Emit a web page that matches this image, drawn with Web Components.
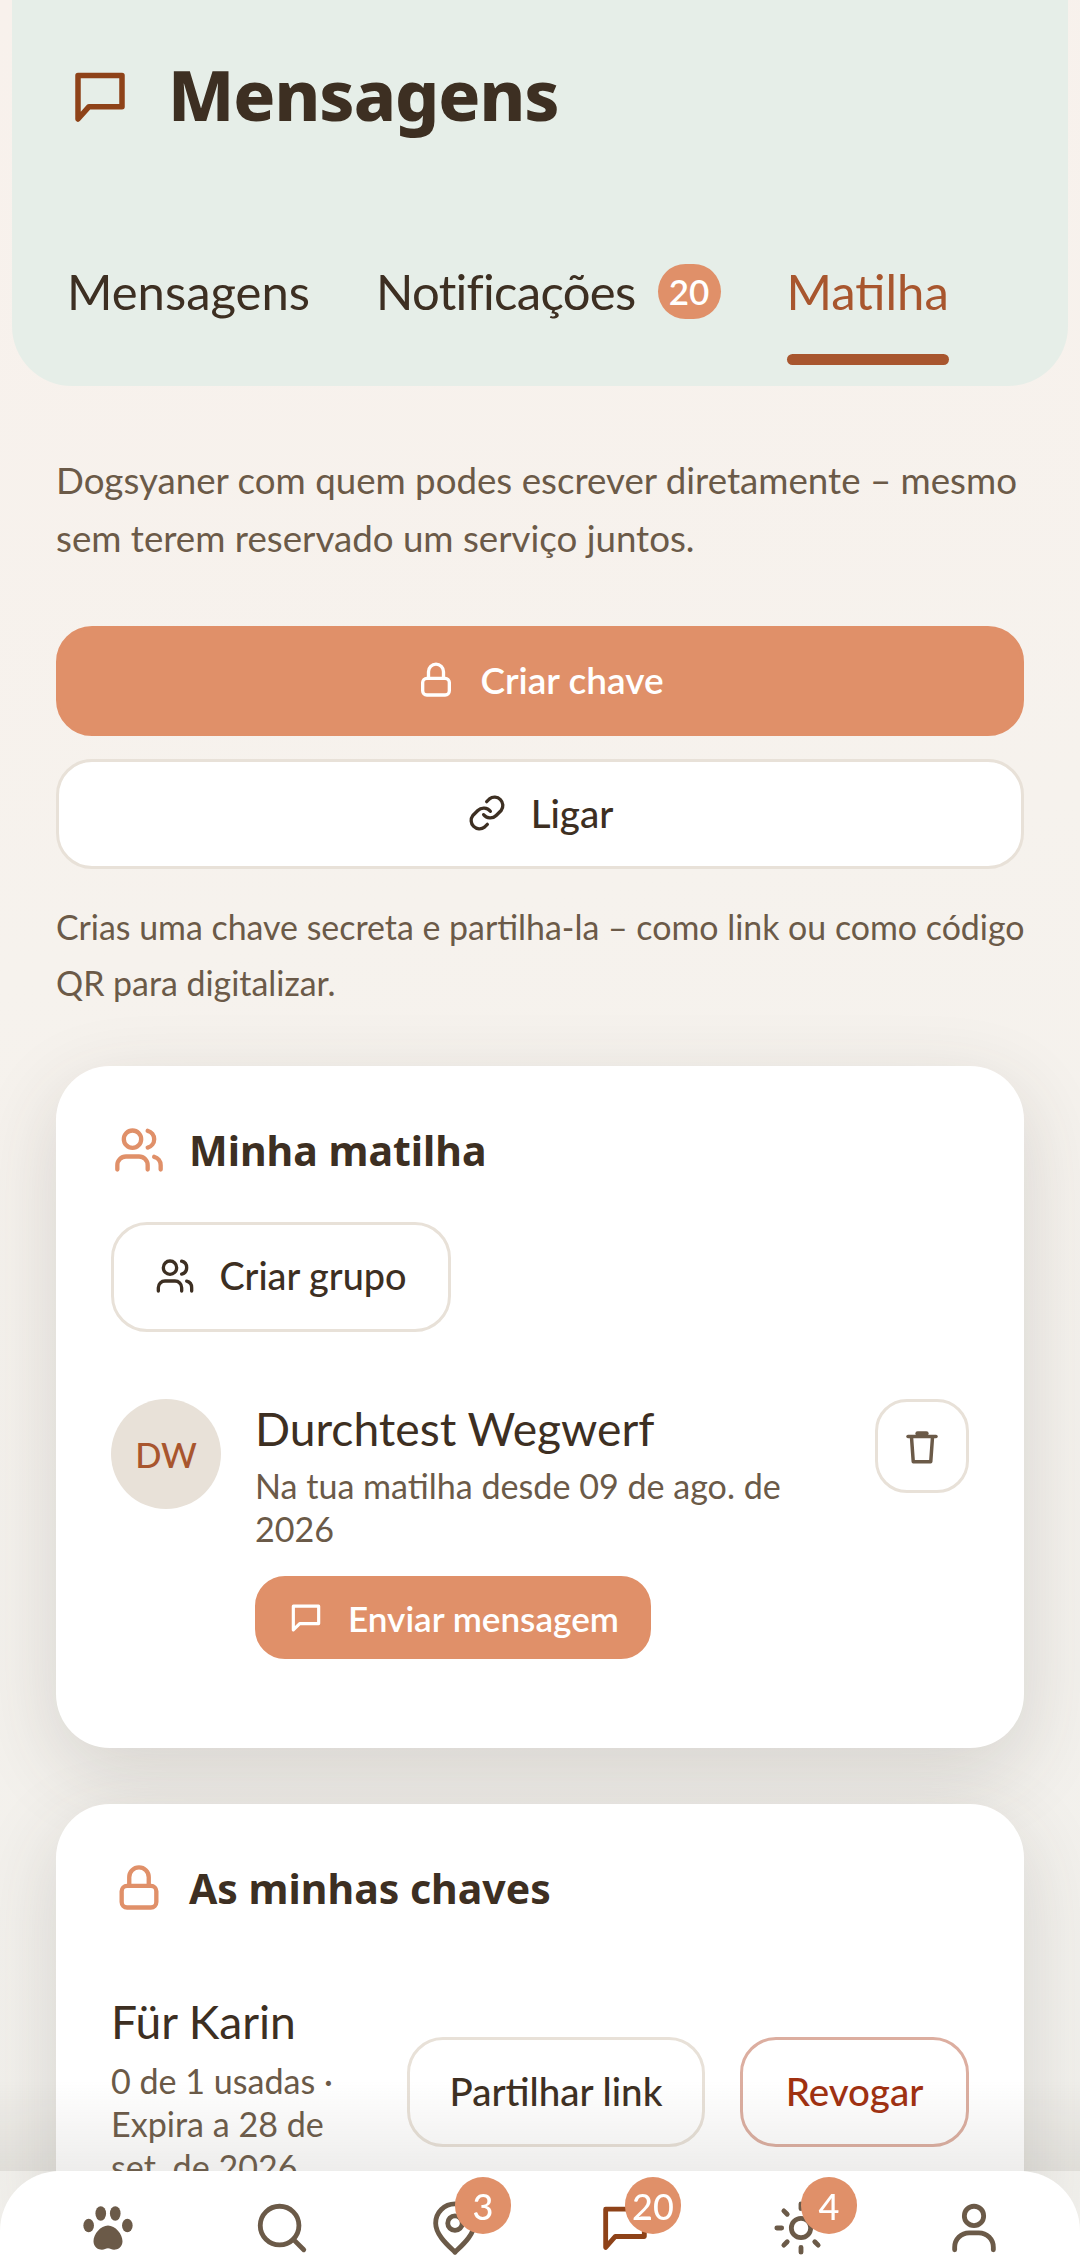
<!DOCTYPE html>
<html lang="pt">
<head>
<meta charset="utf-8">
<title>Mensagens</title>
<style>
  html, body { margin: 0; height: 2268px; overflow: hidden; }
  body {
    background: linear-gradient(170deg, #f8f1ec 0%, #f6f2ed 40%, #f1f0ec 100%);
    font-family: "Lato", "Noto Sans", sans-serif;
    color: #3d2f22;
  }
</style>
</head>
<body>
<msg-header title-text="Mensagens"></msg-header>
<pack-page></pack-page>
<bottom-nav></bottom-nav>

<script>
const ICONS = {
  chat: '<path d="M4 4.200h16v11.300H8L4 20z"/>',
  chatRound: '<path d="M20 15.500H8L4 19.500V4.500h16z"/>',
  lock: '<rect x="4" y="11" width="16" height="10" rx="2.500"/><path d="M7.500 11V7a4.500 4.500 0 0 1 9 0v4"/>',
  link: '<path d="M10 13a5 5 0 0 0 7.500.500l3-3a5 5 0 0 0-7-7l-1.700 1.700"/><path d="M14 11a5 5 0 0 0-7.500-.500l-3 3a5 5 0 0 0 7 7l1.700-1.700"/>',
  users: '<path d="M16 21v-2a4 4 0 0 0-4-4H6a4 4 0 0 0-4 4v2"/><circle cx="9" cy="7" r="4"/><path d="M22 21v-2a4 4 0 0 0-3-3.870"/><path d="M16 3.130a4 4 0 0 1 0 7.750"/>',
  trash: '<path d="M4 6.500h16"/><path d="M9.500 4.800h5" stroke-width="2.600"/><path d="M6 7l1 14h10l1-14"/>',
  search: '<circle cx="11" cy="11" r="8"/><path d="m21 21-4.300-4.300"/>',
  pin: '<path d="M20 10c0 5-5.500 9.500-8 12-2.500-2.500-8-7-8-12a8 8 0 0 1 16 0z"/><circle cx="12" cy="10" r="3"/>',
  sun: '<circle cx="12" cy="12" r="4"/><path d="M12 2v2M12 20v2M4.900 4.900l1.400 1.400M17.700 17.700l1.400 1.400M2 12h2M20 12h2M6.300 17.700l-1.400 1.400M19.100 4.900l-1.400 1.400"/>',
  user: '<path d="M20 21v-1a6 6 0 0 0-6-6h-4a6 6 0 0 0-6 6v1"/><circle cx="12" cy="7" r="4"/>',
  paw: '<g fill="currentColor" stroke="none"><ellipse cx="4" cy="11" rx="2.200" ry="2.800"/><ellipse cx="9" cy="6" rx="2.200" ry="3"/><ellipse cx="15" cy="6" rx="2.200" ry="3"/><ellipse cx="20" cy="11" rx="2.200" ry="2.800"/><path d="M12 11c3 0 6 3.500 6 6.500 0 2.500-2 3.500-3.500 3.500-1 0-1.600-.6-2.500-.6s-1.500.6-2.500.6C8 21 6 20 6 17.500 6 14.500 9 11 12 11z"/></g>'
};

function icon(name, size, stroke) {
  return `<svg width="${size}" height="${size}" viewBox="0 0 24 24" fill="none" stroke="currentColor"
    stroke-width="${stroke || 2}" stroke-linecap="round" stroke-linejoin="round" style="display:block;flex:none">${ICONS[name]}</svg>`;
}

class MsgHeader extends HTMLElement {
  constructor() {
    super();
    this.attachShadow({ mode: "open" });
  }

  connectedCallback() {
    this.shadowRoot.innerHTML = `
      <style>
        :host {
          display: block;
          margin: 0 12px;
          height: 386px;
          box-sizing: border-box;
          padding: 49px 0 0 55px;
          background: #e6eee8;
          border-radius: 0 0 60px 60px;
        }
        .title { display: flex; align-items: center; gap: 35px; color: #8e4218; }
        h1 {
          margin: 0 0 5px;
          font: 800 69.500px/91px "Noto Sans", sans-serif;
          color: #3d2f22;
          letter-spacing: -1px;
        }
        .tabs { display: flex; gap: 66px; margin-top: 91px; }
        .tab {
          display: flex;
          align-items: center;
          gap: 22px;
          height: 129px;
          box-sizing: border-box;
          padding-bottom: 19px;
          font-size: 49px;
          position: relative;
        }
        .tight { letter-spacing: -0.700px; }
        .active { color: #a8562e; }
        .active::after {
          content: "";
          position: absolute;
          left: 0;
          right: 0;
          bottom: 0;
          height: 11px;
          border-radius: 6px;
          background: #a8562e;
        }
        .badge {
          min-width: 63px;
          height: 55px;
          border-radius: 28px;
          background: #e09069;
          color: #fff;
          font-size: 35px;
          font-weight: 600;
          display: flex;
          align-items: center;
          justify-content: center;
        }
      </style>
      <div class="title">${icon("chat", 66)}<h1>${this.getAttribute("title-text")}</h1></div>
      <div class="tabs">
        <div class="tab">Mensagens</div>
        <div class="tab"><span class="tight">Notificações</span><span class="badge">20</span></div>
        <div class="tab active">Matilha</div>
      </div>
    `;
  }
}

class PackButton extends HTMLElement {
  constructor() {
    super();
    this.attachShadow({ mode: "open" });
  }

  connectedCallback() {
    const ic = this.getAttribute("icon");
    this.shadowRoot.innerHTML = `
      <style>
        :host {
          display: inline-flex;
          align-items: center;
          justify-content: center;
          gap: var(--gap, 24px);
          box-sizing: border-box;
          height: 110px;
          padding: 0 40px 3px;
          border-radius: 36px;
          background: #fff;
          border: 3px solid #e8e1d8;
          font-size: 38.500px;
          font-weight: 500;
          color: #3d2f22;
          white-space: nowrap;
        }
        :host([kind="primary"]) {
          background: #e09069;
          border-color: #e09069;
          color: #fff;
          font-weight: 600;
        }
        :host([kind="danger"]) { border-color: #dcaea0; color: #a03010; }
      </style>
      ${ic ? icon(ic, this.getAttribute("icon-size") || 44) : ""}<slot></slot>
    `;
  }
}

class PackCard extends HTMLElement {
  constructor() {
    super();
    this.attachShadow({ mode: "open" });
  }

  connectedCallback() {
    this.shadowRoot.innerHTML = `
      <style>
        :host {
          display: block;
          box-sizing: border-box;
          padding: 54px 55px 56px;
          background: #fff;
          border-radius: 54px;
          box-shadow: 0 24px 80px rgba(60, 58, 50, 0.16);
        }
        h2 {
          display: flex;
          align-items: center;
          gap: 24px;
          margin: 0;
          padding-left: 2px;
          height: 60px;
          font: 700 41px/60px "Noto Sans", sans-serif;
          color: #3d2f22;
        }
        h2 svg { color: #e09069; }
      </style>
      <h2>${icon(this.getAttribute("icon"), 52)}${this.getAttribute("heading")}</h2>
      <slot></slot>
    `;
  }
}

class PackMember extends HTMLElement {
  constructor() {
    super();
    this.attachShadow({ mode: "open" });
  }

  connectedCallback() {
    this.shadowRoot.innerHTML = `
      <style>
        :host { display: flex; align-items: flex-start; gap: 34px; margin: 67px 0 33px; }
        .avatar {
          flex: none;
          width: 110px;
          height: 110px;
          border-radius: 50%;
          background: #e8e1d8;
          color: #a8562e;
          font-size: 34.500px;
          font-weight: 500;
          display: flex;
          align-items: center;
          justify-content: center;
        }
        .info { flex: 1; min-width: 0; }
        .name { font-size: 46.200px; line-height: 62px; margin-top: -2px; }
        .sub { font-size: 34.100px; line-height: 43px; color: #6b5a48; margin-top: 5px; width: 560px; }
        .send {
          --gap: 23px;
          height: 83px;
          margin-top: 26px;
          padding: 0 29px;
          border-radius: 30px;
          font-size: 35.100px;
        }
        .del {
          flex: none;
          width: 94px;
          height: 94px;
          padding: 0;
          border-radius: 32px;
          color: #6b5a48;
        }
      </style>
      <div class="avatar">${this.getAttribute("initials")}</div>
      <div class="info">
        <div class="name">${this.getAttribute("name")}</div>
        <div class="sub">${this.getAttribute("since")}</div>
        <pack-button class="send" kind="primary" icon="chatRound" icon-size="38">Enviar mensagem</pack-button>
      </div>
      <pack-button class="del" icon="trash" icon-size="42"></pack-button>
    `;
  }
}

class PackKey extends HTMLElement {
  constructor() {
    super();
    this.attachShadow({ mode: "open" });
  }

  connectedCallback() {
    this.shadowRoot.innerHTML = `
      <style>
        :host { display: flex; align-items: flex-start; gap: 35px; margin-top: 72px; }
        .info { flex: 1; min-width: 0; }
        .name { font-size: 46.200px; line-height: 62px; }
        .sub { font-size: 34.100px; line-height: 43px; color: #6b5a48; margin-top: 7px; }
        pack-button { flex: none; margin-top: 47px; }
        .share { width: 298px; }
        .revoke { width: 229px; }
      </style>
      <div class="info">
        <div class="name">${this.getAttribute("name")}</div>
        <div class="sub">${this.getAttribute("usage")}</div>
      </div>
      <pack-button class="share">Partilhar link</pack-button>
      <pack-button class="revoke" kind="danger">Revogar</pack-button>
    `;
  }
}

class PackPage extends HTMLElement {
  constructor() {
    super();
    this.attachShadow({ mode: "open" });
  }

  connectedCallback() {
    this.shadowRoot.innerHTML = `
      <style>
        :host { display: block; padding: 65px 56px 0; }
        p { margin: 0; color: #6b5a48; }
        .intro { font-size: 36.700px; line-height: 58px; }
        .wide { display: flex; width: 100%; }
        .create { margin-top: 59px; font-size: 37px; }
        .join { margin-top: 23px; }
        .note { font-size: 33.900px; line-height: 56px; margin-top: 30px; white-space: nowrap; }
        pack-card { margin-top: 56px; }
        .first { margin-top: 55px; }
        .group { width: 340px; margin-top: 42px; font-size: 37.800px; }
      </style>
      <p class="intro">Dogsyaner com quem podes escrever diretamente – mesmo sem terem reservado um serviço juntos.</p>
      <pack-button class="wide create" kind="primary" icon="lock" icon-size="40">Criar chave</pack-button>
      <pack-button class="wide join" icon="link" icon-size="40">Ligar</pack-button>
      <p class="note">Crias uma chave secreta e partilha-la – como link ou como código<br>QR para digitalizar.</p>
      <pack-card class="first" icon="users" heading="Minha matilha">
        <pack-button class="group" icon="users" icon-size="40">Criar grupo</pack-button>
        <pack-member initials="DW" name="Durchtest Wegwerf" since="Na tua matilha desde 09 de ago. de 2026"></pack-member>
      </pack-card>
      <pack-card icon="lock" heading="As minhas chaves">
        <pack-key name="Für Karin" usage="0 de 1 usadas · Expira a 28 de set. de 2026"></pack-key>
      </pack-card>
    `;
  }
}

class BottomNav extends HTMLElement {
  constructor() {
    super();
    this.attachShadow({ mode: "open" });
  }

  connectedCallback() {
    const items = [
      { name: "paw" },
      { name: "search" },
      { name: "pin", badge: "3" },
      { name: "chat", badge: "20", active: true },
      { name: "sun", badge: "4" },
      { name: "user" },
    ];
    const html = items.map((it) => `
      <div class="item ${it.active ? "on" : ""}">
        ${icon(it.name, 58)}
        ${it.badge ? `<span class="badge">${it.badge}</span>` : ""}
      </div>`).join("");
    this.shadowRoot.innerHTML = `
      <style>
        :host {
          position: fixed;
          left: 0;
          right: 0;
          bottom: 0;
          height: 97px;
        }
        :host::before {
          content: "";
          position: absolute;
          left: 0;
          right: 0;
          top: -90px;
          height: 90px;
          background: linear-gradient(rgba(120, 115, 105, 0), rgba(120, 115, 105, 0.13));
        }
        .bar {
          position: relative;
          height: 97px;
          box-sizing: border-box;
          padding: 28px 0 0 79px;
          background: #fff;
          border-radius: 60px 60px 0 0;
          display: grid;
          grid-template-columns: 174px 173px 170px 176px 173px 58px;
        }
        .item { position: relative; width: 58px; height: 58px; color: #6b5a48; }
        .on { color: #8e4218; }
        .badge {
          position: absolute;
          right: -27px;
          top: -22px;
          min-width: 56px;
          height: 57px;
          padding: 0 3px;
          box-sizing: border-box;
          border-radius: 29px;
          background: #e09069;
          color: #fff;
          font-size: 36px;
          font-weight: 500;
          display: flex;
          align-items: center;
          justify-content: center;
        }
      </style>
      <div class="bar">${html}</div>
    `;
  }
}

customElements.define("msg-header", MsgHeader);
customElements.define("pack-button", PackButton);
customElements.define("pack-card", PackCard);
customElements.define("pack-member", PackMember);
customElements.define("pack-key", PackKey);
customElements.define("pack-page", PackPage);
customElements.define("bottom-nav", BottomNav);
</script>
</body>
</html>
